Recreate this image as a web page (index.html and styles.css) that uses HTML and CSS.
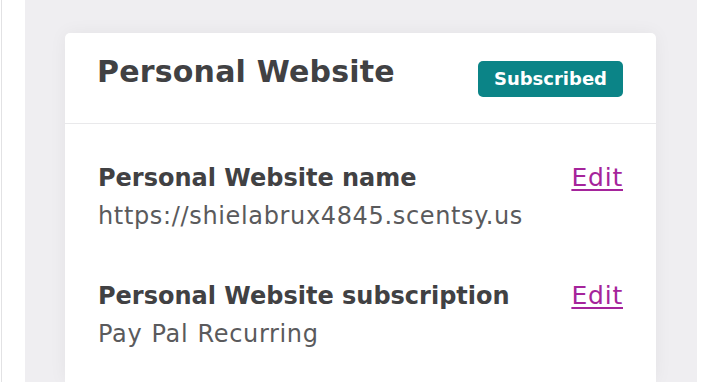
FILE: index.html
```html
<!DOCTYPE html>
<html>
<head>
<meta charset="utf-8">
<link rel="stylesheet" href="styles.css">
</head>
<body>
<div class="page">
  <div class="side-left"></div>
  <main class="panel">
    <section class="card">
      <header class="card-head">
        <h2 class="title">Personal Website</h2>
        <span class="badge">Subscribed</span>
      </header>
      <div class="card-body">
        <div class="row">
          <div class="info">
            <div class="label">Personal Website name</div>
            <div class="value">https://shielabrux4845.scentsy.us</div>
          </div>
          <a class="edit" href="#">Edit</a>
        </div>
        <div class="row">
          <div class="info">
            <div class="label">Personal Website subscription</div>
            <div class="value">Pay Pal Recurring</div>
          </div>
          <a class="edit" href="#">Edit</a>
        </div>
      </div>
    </section>
  </main>
  <div class="side-right"></div>
</div>
</body>
</html>
```
FILE: styles.css
```css
html, body {
  margin: 0;
  padding: 0;
  height: 100%;
  overflow: hidden;
}
body {
  font-family: "DejaVu Sans", "Noto Sans", sans-serif;
  background: #ffffff;
}
.page {
  display: flex;
  height: 382px;
}
.side-left {
  width: 23px;
  background: #ffffff;
  border-left: 1px solid #e2e2e4;
  margin-left: 1px;
}
.side-right {
  width: 23px;
  background: #ffffff;
}
.panel {
  flex: 1;
  background: #efeef1;
  padding: 33px 41px 0 40px;
}
.card {
  background: #ffffff;
  border-radius: 5px 5px 0 0;
  box-shadow: 0 0 18px rgba(0, 0, 0, 0.05);
  height: 100%;
}
.card-head {
  display: flex;
  justify-content: space-between;
  align-items: flex-start;
  height: 91px;
  padding: 0 33px 0 32px;
  border-bottom: 1px solid #e9e9eb;
  box-sizing: border-box;
}
.title {
  margin: 19px 0 0;
  font-size: 30px;
  font-weight: 700;
  color: #414143;
  line-height: 40px;
  letter-spacing: 0.2px;
}
.badge {
  margin-top: 28px;
  background: #0b8487;
  color: #ffffff;
  font-size: 18px;
  font-weight: 700;
  line-height: 36px;
  padding: 0 16px;
  border-radius: 5px;
}
.card-body {
  padding: 35px 33px 0 33px;
  display: flex;
  flex-direction: column;
  gap: 42px;
}
.row {
  display: flex;
  justify-content: space-between;
  align-items: flex-start;
}
.label {
  font-size: 24px;
  font-weight: 700;
  color: #414143;
  line-height: 38px;
}
.value {
  font-size: 24px;
  color: #5a5a5c;
  line-height: 38px;
  letter-spacing: 0.65px;
  word-spacing: 1px;
}
.edit {
  font-size: 25px;
  line-height: 38px;
  color: #a5249b;
  letter-spacing: 0.8px;
  text-decoration: underline;
  text-underline-offset: 3px;
}
```
